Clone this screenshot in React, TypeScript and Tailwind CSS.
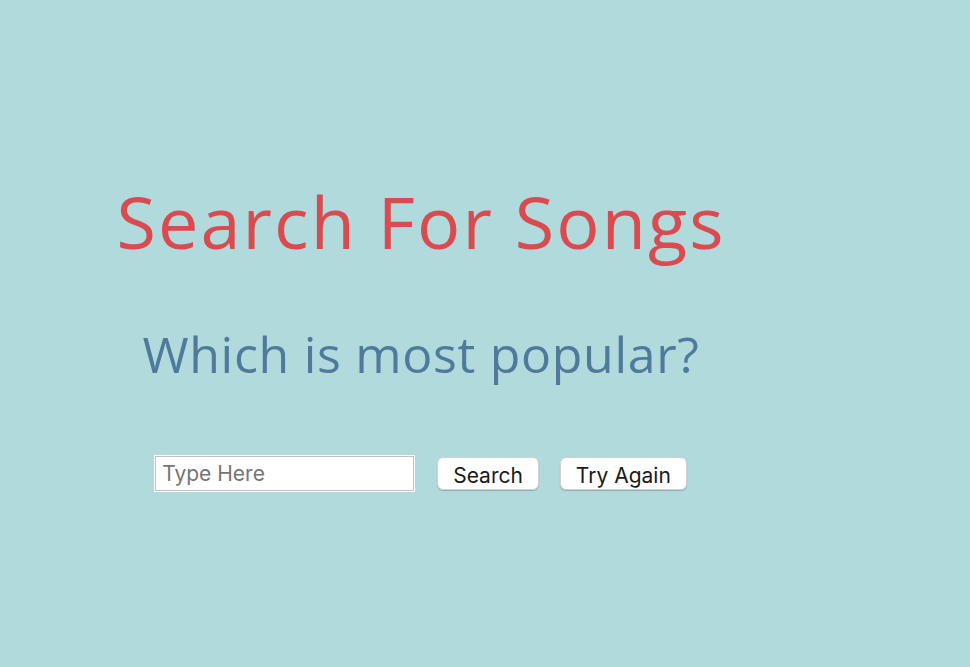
export default function App() {
  return (
    <div className="min-h-screen w-full bg-[#b1dadc]">
      <div className="w-[842px] flex flex-col items-center pt-[185px]">
        <h1 className="text-[72px] leading-none tracking-[2.1px] text-[#d94b4f] font-['Open_Sans',sans-serif] font-normal">
          Search For Songs
        </h1>
        <h2 className="mt-[72px] text-[50px] leading-none tracking-[0.7px] text-[#4f7a9c] font-['Open_Sans',sans-serif] font-normal">
          Which is most popular?
        </h2>
        <div className="mt-[77px] flex items-center">
          <input
            type="text"
            placeholder="Type Here"
            className="w-[259px] h-[35px] bg-white border border-[#c2c2c2] ring-1 ring-white px-[6px] text-[21px] text-black placeholder:text-[#757575] font-['Inter',sans-serif] focus:outline-none"
          />
          <button className="ml-[23px] h-[33px] px-[15px] pt-[2px] rounded-[6px] bg-white border border-[#d0d0d0] shadow-[0_1px_1px_rgba(0,0,0,0.2)] text-[21px] text-[#1a1a1a] font-['Inter',sans-serif]">
            Search
          </button>
          <button className="ml-[21px] h-[33px] px-[15px] pt-[2px] rounded-[6px] bg-white border border-[#d0d0d0] shadow-[0_1px_1px_rgba(0,0,0,0.2)] text-[21px] text-[#1a1a1a] font-['Inter',sans-serif]">
            Try Again
          </button>
        </div>
      </div>
    </div>
  );
}
